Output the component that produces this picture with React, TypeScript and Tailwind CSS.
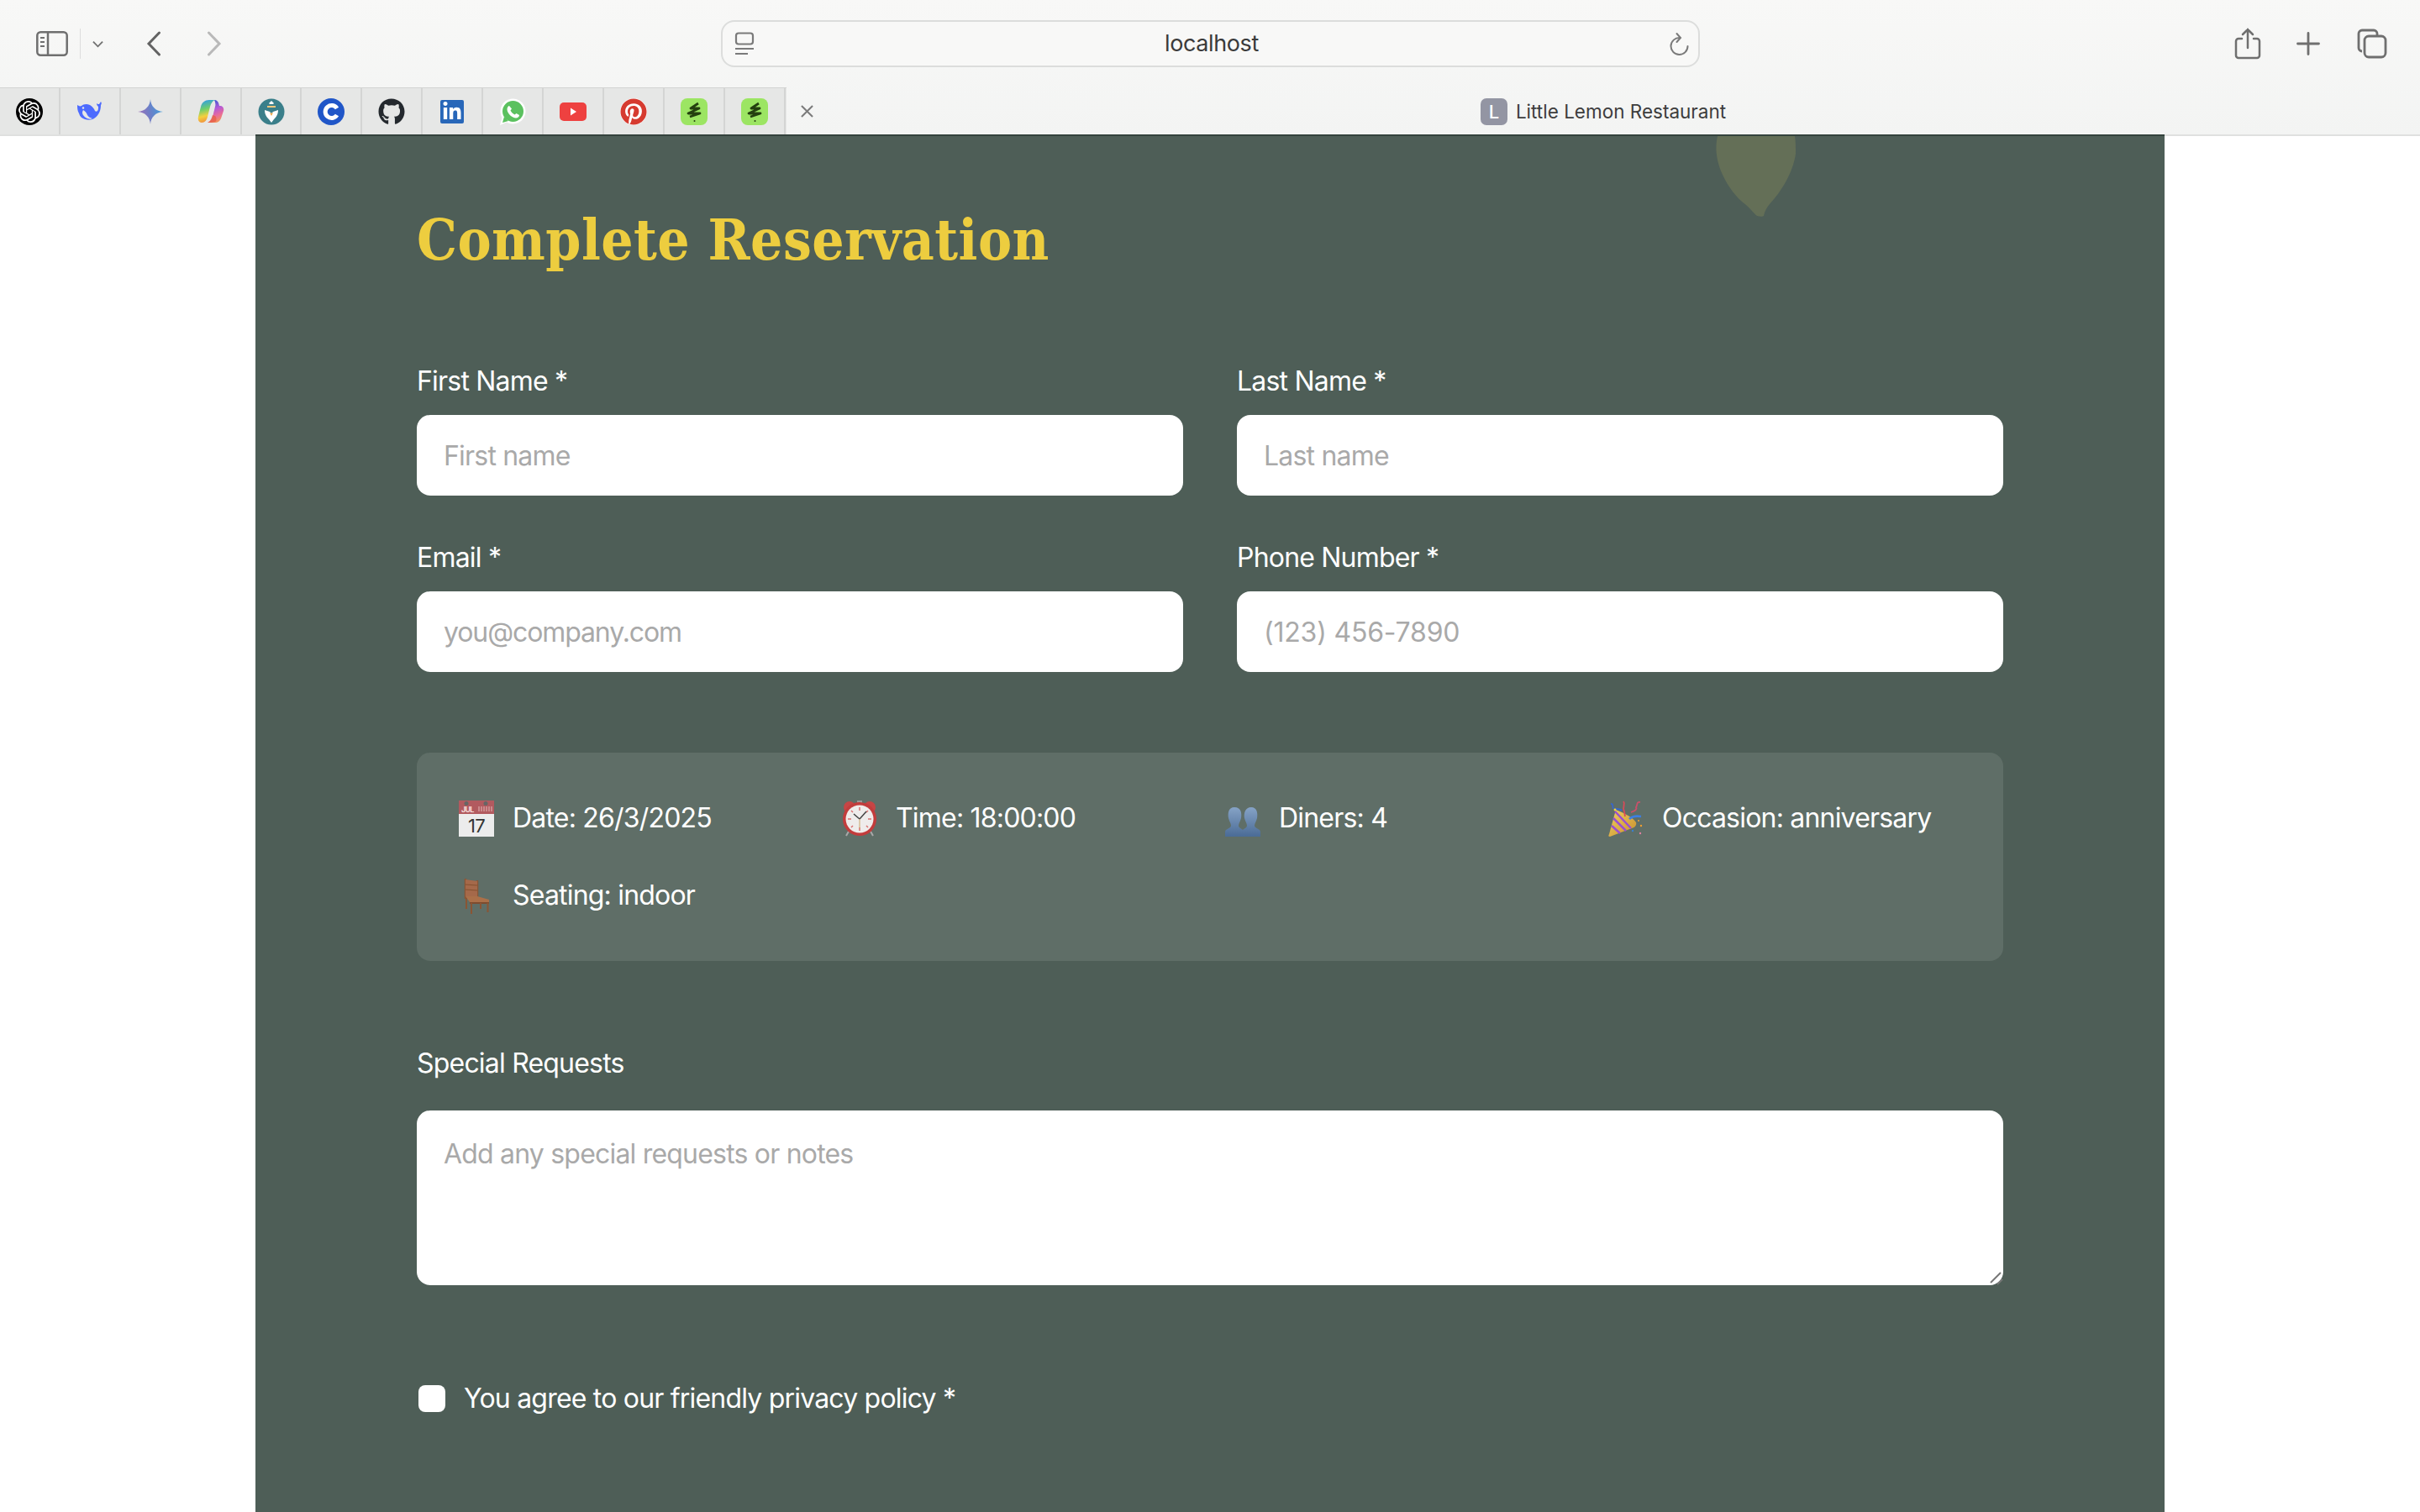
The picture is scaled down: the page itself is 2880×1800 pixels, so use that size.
import React from 'react';
import { SiOpenai } from 'react-icons/si';
import { FaGithub, FaLinkedinIn, FaPinterest } from 'react-icons/fa';

const inter = "[font-family:Inter,'Noto_Sans',sans-serif]";

// --- favicons ---
const DeepSeek = () => (
  <svg viewBox="0 0 32 32" className="w-8 h-8">
    <path
      fill="#4d6bfe"
      d="M1 8c2 1 3 2 5 1 2-2 6-3 10-1 3 2 5 4 6 7 1 1 2 1 3 0 1-1 1-3 1-5-1-1-2-2-2-4 1 1 2 1 3 1l2-3c1 1 1 3 0 4 0 6-2 12-8 16-3 2-7 2-11 1-3-1-6-3-7-7-2-3-2-7-2-10z"
    />
    <path fill="#e7e8e7" d="M8 14c-2 3-1 6 3 9 3 2 6 2 8 1-3-1-5-2-6-4-1-3-3-5-5-6z" />
    <circle cx="8" cy="11.500" r="1.200" fill="#e7e8e7" />
  </svg>
);

const Gemini = () => (
  <svg viewBox="0 0 32 32" className="w-8 h-8">
    <defs>
      <linearGradient id="gem" x1="0" y1="0.6" x2="1" y2="0.4">
        <stop offset="0" stopColor="#a070b8" />
        <stop offset="0.5" stopColor="#6a80c8" />
        <stop offset="1" stopColor="#3f9fdc" />
      </linearGradient>
    </defs>
    <path fill="url(#gem)" d="M16 1c.5 8 6 14.500 15 15-9 .5-14.500 7-15 15-.5-8-6-14.500-15-15 9-.5 14.500-7 15-15z" />
  </svg>
);

const Copilot = () => (
  <svg viewBox="0 0 32 32" className="w-8 h-8">
    <defs>
      <linearGradient id="copA" x1="0.3" y1="0" x2="0.5" y2="1">
        <stop offset="0" stopColor="#2f9be8" />
        <stop offset="0.4" stopColor="#6fcf6a" />
        <stop offset="0.7" stopColor="#f4d03e" />
        <stop offset="1" stopColor="#f08a3c" />
      </linearGradient>
      <linearGradient id="copB" x1="0.3" y1="0" x2="0.6" y2="1">
        <stop offset="0" stopColor="#2f55d0" />
        <stop offset="0.4" stopColor="#b25ad8" />
        <stop offset="0.7" stopColor="#e86a9a" />
        <stop offset="1" stopColor="#f29a55" />
      </linearGradient>
    </defs>
    <path fill="url(#copB)" d="M20 2c3 0 5 2 5.500 5l.5 2h1c3 0 5 3 4 6l-3 9c-1 3-4 5-7 5h-9c3-1 5-3 6-7l3-12c1-3 0-6-1-8z" />
    <path fill="url(#copA)" d="M14 2h7c-3 1-5 4-6 8l-3 12c-1 4-3 7-7 7H5c-3 0-5-3-4-7l3-12C5 5 9 2 14 2z" />
    <path fill="#e8604a" d="M12 29c2-1 4-3 5-6l1-3 3 1c2 2 2 6 0 7-3 1-6 1-9 1z" opacity="0.85" />
  </svg>
);

const Perplexity = () => (
  <svg viewBox="0 0 32 32" className="w-8 h-8">
    <circle cx="16" cy="16" r="15.500" fill="#3a7f8a" />
    <path fill="#fff" d="M16 3l3 3-1 1h-4l-1-1z" />
    <path fill="#f6c77c" d="M11 9h10v2H11z" />
    <path fill="#fff" d="M8 14l6 2 2 2 2-2 6-2c0 6-3 9-5 11l-3 4-3-4c-2-2-5-5-5-11z" />
    <path fill="#f0a23a" d="M14 17l2 4 2-4-2 1z" />
  </svg>
);

const Coursera = () => (
  <svg viewBox="0 0 32 32" className="w-8 h-8">
    <circle cx="16" cy="16" r="16" fill="#2056c8" />
    <path fill="none" stroke="#fff" strokeWidth="5" d="M23 12a7.500 7.500 0 1 0 0 8" />
  </svg>
);

const WhatsApp = () => (
  <svg viewBox="0 0 32 32" className="w-8 h-8">
    <path fill="#fff" d="M1 32l2.500-9A15 15 0 1 1 9 28.500z" />
    <circle cx="16.500" cy="15.500" r="12.500" fill="#5bc15f" />
    <path fill="#5bc15f" d="M4 29l2-7 5 5z" />
    <path fill="#fff" d="M12 9c-1 0-2.500 2-2.500 4 0 5 6 10.500 10.500 10.500 2 0 4-1.500 4-3.500l-3.500-2-2 1.500c-2-1-4-3-5-5l1.500-2z" />
  </svg>
);

const YouTube = () => (
  <svg viewBox="0 0 32 32" className="w-8 h-8">
    <rect x="0" y="5" width="32" height="22" rx="5" fill="#ee4140" />
    <path fill="#fff" d="M13 11.500l7 4.500-7 4.500z" />
  </svg>
);

const Bolt = () => (
  <svg viewBox="0 0 32 32" className="w-8 h-8">
    <rect width="32" height="32" rx="8" fill="#9ce563" />
    <path
      fill="none"
      stroke="#24400f"
      strokeWidth="2.800"
      strokeLinejoin="round"
      d="M21 6l-9 6h10l-13 6h14l-12 4"
    />
    <circle cx="16.500" cy="27" r="1" fill="#24400f" />
  </svg>
);

const Favicon = ({ children }: { children: React.ReactNode }) => (
  <div className="w-[71.9px] h-full flex items-center justify-center border-r-2 border-[#d4d5d4]">{children}</div>
);

const Tabs = () => (
  <div className="w-[936px] h-full flex bg-[#e6e7e6] border-t border-[#d2d3d2]">
    <Favicon>
      <div className="w-8 h-8 rounded-full bg-black flex items-center justify-center">
        <SiOpenai className="w-[26px] h-[26px] text-white" />
      </div>
    </Favicon>
    <Favicon><DeepSeek /></Favicon>
    <Favicon><Gemini /></Favicon>
    <Favicon><Copilot /></Favicon>
    <Favicon><Perplexity /></Favicon>
    <Favicon><Coursera /></Favicon>
    <Favicon><FaGithub className="w-8 h-8 text-[#24292e]" /></Favicon>
    <Favicon>
      <div className="w-7 h-7 rounded-[2px] bg-[#2867b9] flex items-center justify-center">
        <FaLinkedinIn className="w-6 h-6 text-white" />
      </div>
    </Favicon>
    <Favicon><WhatsApp /></Favicon>
    <Favicon><YouTube /></Favicon>
    <Favicon>
      <div className="w-8 h-8 rounded-full bg-white flex items-center justify-center">
        <FaPinterest className="w-8 h-8 text-[#d63b30]" />
      </div>
    </Favicon>
    <Favicon><Bolt /></Favicon>
    <Favicon><Bolt /></Favicon>
  </div>
);

// --- browser chrome ---
const Toolbar = () => (
  <div className="h-[104px] flex items-center">
    <svg viewBox="0 0 38 30" className="w-[38px] h-[30px] ml-[43px]" fill="none" stroke="#6f6f6f" strokeWidth="2.500">
      <rect x="1.300" y="1.300" width="35.400" height="27.400" rx="4" />
      <path d="M14 1.500v27" />
      <path d="M5 8h5M5 13h5M5 18h5" strokeWidth="2" />
    </svg>
    <div className="w-px h-9 ml-[14px] bg-[#dddddd]" />
    <svg viewBox="0 0 14 9" className="w-[13px] h-[9px] ml-[14px]" fill="none" stroke="#707070" strokeWidth="2">
      <path d="M1 1.500l6 6 6-6" />
    </svg>
    <svg viewBox="0 0 18 30" className="w-[18px] h-[30px] ml-[51px]" fill="none" stroke="#636363" strokeWidth="3" strokeLinecap="round">
      <path d="M15.500 2L3 15l12.500 13" />
    </svg>
    <svg viewBox="0 0 18 30" className="w-[18px] h-[30px] ml-[54px]" fill="none" stroke="#b9b9b9" strokeWidth="3" strokeLinecap="round">
      <path d="M2.500 2L15 15 2.500 28" />
    </svg>

    <div className="w-[1165px] h-14 ml-[594px] flex items-center justify-between pl-[14px] pr-[11px] rounded-2xl border-2 border-[#dcdddc] bg-[#f8f8f7]">
      <svg viewBox="0 0 24 28" className="w-6 h-7" fill="none" stroke="#7a7a7a" strokeWidth="2.200">
        <rect x="2" y="1.500" width="20" height="13" rx="3" />
        <path d="M1 20h22M1 26h15" />
      </svg>
      <span className={`${inter} text-[27px] tracking-[-0.4px] text-[#3b3b3b]`}>localhost</span>
      <svg viewBox="0 0 24 28" className="w-6 h-7" fill="none" stroke="#7a7a7a" strokeWidth="2" strokeLinecap="round">
        <path d="M13 7A10 10 0 1 0 22.500 17" />
        <path d="M9.500 2L14 7l-4.500 5" />
      </svg>
    </div>

    <svg viewBox="0 0 32 38" className="w-8 h-[38px] ml-[636px]" fill="none" stroke="#6f6f6f" strokeWidth="2.500" strokeLinecap="round">
      <path d="M9 13H5a3 3 0 0 0-3 3v17a3 3 0 0 0 3 3h22a3 3 0 0 0 3-3V16a3 3 0 0 0-3-3h-4" />
      <path d="M16 24V2M10 8l6-6 6 6" />
    </svg>
    <svg viewBox="0 0 28 28" className="w-7 h-7 ml-[42px]" fill="none" stroke="#6f6f6f" strokeWidth="2.800" strokeLinecap="round">
      <path d="M14 1.500v25M1.500 14h25" />
    </svg>
    <svg viewBox="0 0 36 36" className="w-9 h-9 ml-[44px]" fill="none" stroke="#6f6f6f" strokeWidth="2.800">
      <path d="M6 27a4 4 0 0 1-4-4V6a4 4 0 0 1 4-4h14a4 4 0 0 1 4 4v2" />
      <rect x="9" y="9" width="25" height="25" rx="5" />
    </svg>
  </div>
);

const TabRow = () => (
  <div className="h-14 flex items-stretch">
    <Tabs />
    <div className="w-[48px] flex items-center justify-center">
      <svg viewBox="0 0 18 16" className="w-[17px] h-[15px]" fill="none" stroke="#7b7b7b" strokeWidth="2.200">
        <path d="M2 1l14 14M16 1L2 15" />
      </svg>
    </div>
    <div className="flex-1 pr-[48px] pt-[2px] flex items-center justify-center gap-[10px]">
      <div className={`${inter} w-8 h-8 rounded-[7px] bg-[#9395a3] text-white text-[22px] font-medium flex items-center justify-center`}>L</div>
      <span className={`${inter} text-[22.500px] text-[#3d3d3d]`}>Little Lemon Restaurant</span>
    </div>
  </div>
);

// --- emoji drawings ---
const CalendarEmoji = () => (
  <svg viewBox="0 0 42 43" className="w-[42px] h-[43px]">
    <rect width="42" height="16" fill="#b25a5f" />
    <rect y="16" width="42" height="27" fill="#ececec" />
    <text x="3" y="14" fontSize="9" fill="#f5dede" fontFamily="Inter" fontWeight="700">JUL</text>
    <path d="M24 13V7M27 13V7M30 13V7M33 13V7M36 13V7M39 13V7" stroke="#d49a9c" strokeWidth="1.500" />
    <circle cx="9" cy="3.500" r="2.500" fill="#666666" />
    <circle cx="32" cy="3.500" r="2.500" fill="#666666" />
    <text x="21" y="38" fontSize="22" textAnchor="middle" fill="#333333" fontFamily="Inter">17</text>
  </svg>
);

const ClockEmoji = () => (
  <svg viewBox="0 0 42 43" className="w-[42px] h-[43px]">
    <path d="M9 35l-4 7M33 35l4 7" stroke="#a8a8a8" strokeWidth="2" />
    <circle cx="9" cy="8" r="7" fill="#c64545" />
    <circle cx="33" cy="8" r="7" fill="#c64545" />
    <rect x="18" y="0" width="6" height="4" fill="#999999" />
    <circle cx="21" cy="22" r="20" fill="#c23c3c" />
    <circle cx="21" cy="22" r="16.500" fill="#efeceb" />
    <path d="M21 8v4M21 32v4M7 22h4M31 22h4M11 12l2 2M31 12l-2 2M11 32l2-2M31 32l-2-2" stroke="#d9706f" strokeWidth="1.500" />
    <path d="M21 22l-7-6M21 22l8-9" stroke="#444444" strokeWidth="1.500" />
    <path d="M21 22v11" stroke="#c9a86a" strokeWidth="1" />
  </svg>
);

const DinersEmoji = () => (
  <svg viewBox="0 0 42 43" className="w-[42px] h-[43px]">
    <defs>
      <linearGradient id="bust" x1="0" y1="0" x2="0" y2="1">
        <stop offset="0" stopColor="#86a3c6" />
        <stop offset="1" stopColor="#4a6b96" />
      </linearGradient>
    </defs>
    <path fill="url(#bust)" d="M11 8C4 8 3 15 4 21c1 4 3 6 3 9 0 3-7 4-7 7v6h22v-6c0-3-6-4-6-7 0-3 2-5 3-9 1-6 0-13-8-13z" />
    <path fill="url(#bust)" d="M31 8c-7 0-9 7-8 13 1 4 3 6 3 9 0 3-6 4-6 7v6h22v-6c0-3-7-4-7-7 0-3 2-5 3-9 1-6 0-13-7-13z" />
  </svg>
);

const PartyEmoji = () => (
  <svg viewBox="0 0 42 43" className="w-[42px] h-[43px]">
    <defs>
      <linearGradient id="cone" x1="0" y1="0" x2="1" y2="1">
        <stop offset="0" stopColor="#f0cf62" />
        <stop offset="1" stopColor="#c98f2c" />
      </linearGradient>
    </defs>
    <path fill="url(#cone)" d="M9 11c5 2 20 8 24 15 1 3-1 6-5 7L2 43c-2 0-2-1-1-3z" />
    <path d="M6 21l15 15M4 30l10 9M8 13l19 20" stroke="#9a4fd0" strokeWidth="2.500" fill="none" />
    <path d="M18 1c3 4-2 6 1 12l1 6" stroke="#d84b5a" strokeWidth="1.800" fill="none" />
    <path d="M3 4c5 0-1 6 6 6 3 0 5 0 7 2" stroke="#3a67c8" strokeWidth="1.800" fill="none" />
    <path d="M38 2c-5-1-3 4-5 6 2 3-3 5-6 6" stroke="#c9506a" strokeWidth="1.800" fill="none" />
    <path d="M25 22c3-3 8-4 14-3" stroke="#3d7fe0" strokeWidth="2.600" fill="none" />
    <circle cx="8" cy="11" r="1.400" fill="#f0d040" />
    <circle cx="39" cy="30" r="1.200" fill="#f0a030" />
    <circle cx="38" cy="39" r="1.200" fill="#e080a0" />
    <circle cx="29" cy="36" r="1.200" fill="#3a80d0" />
    <circle cx="36" cy="24" r="1" fill="#f0a030" />
  </svg>
);

const ChairEmoji = () => (
  <svg viewBox="0 0 31 43" className="w-[31px] h-[43px] ml-[6px]">
    <path d="M2 1v24M16 3v21" stroke="#8a5534" strokeWidth="2.500" />
    <path fill="#a5694a" d="M2 2l14 2v18H2z" />
    <path d="M2 8l14 1M2 14l14 1" stroke="#84502f" strokeWidth="1.200" />
    <path fill="#ab7049" d="M2 22h14l14 4v3L7 29z" />
    <path fill="#7d4c2e" d="M7 29l23 0v2H7z" />
    <path d="M3 24v13M9 30v13M28.500 30v11M20 30v7" stroke="#8a5534" strokeWidth="2" />
  </svg>
);

const infoItems = [
  { icon: <CalendarEmoji />, label: 'Date: 26/3/2025' },
  { icon: <ClockEmoji />, label: 'Time: 18:00:00' },
  { icon: <DinersEmoji />, label: 'Diners: 4' },
  { icon: <PartyEmoji />, label: 'Occasion: anniversary' },
  { icon: <ChairEmoji />, label: 'Seating: indoor' },
];

const inputClass = `${inter} w-full h-24 px-8 rounded-2xl bg-white text-[32px] text-[#333] placeholder:text-[#a9a9a9] outline-none`;

const Field = ({ label, placeholder, extra }: { label: string; placeholder: string; extra?: string }) => (
  <div>
    <label className="block h-12 mb-[17px] text-[32px] leading-[50px] text-white">{label}</label>
    <input className={`${inputClass} ${extra ?? ''}`} placeholder={placeholder} />
  </div>
);

export default function App() {
  return (
    <div className={`${inter} h-[1800px] overflow-hidden bg-white`}>
      <header className="h-[160px] bg-linear-to-b from-[#f8f8f7] to-[#f3f4f3]">
        <Toolbar />
        <TabRow />
      </header>

      <div className="border-t-2 border-[#dfe0df]">
        <main className="relative w-[2272px] h-[1640px] mx-auto -mt-[2px] px-48 pt-[76px] overflow-hidden tracking-[-0.8px] bg-[#4e5e57] border-t-2 border-[#34433d]">
          {/* decorative leaf clipped by the panel top */}
          <svg viewBox="0 0 95 96" className="absolute top-0 left-[1738px] w-[95px] h-[96px]">
            <path
              fill="#646f57"
              d="M2 0C-1 14 0 28 8 46c7 15 16 27 28 36 5 4 9 10 13 13 3 1 7 1 8 0 1-5 3-9 7-14 14-15 28-38 31-60 0-8 0-15-1-21z"
            />
          </svg>

          <h1 className="h-24 text-[67px] leading-[96px] tracking-[0.45px] font-bold text-[#edcd3f] [font-family:'DejaVu_Serif_Condensed','DejaVu_Serif',serif]">
            Complete Reservation
          </h1>

          <div className="mt-[95px] grid grid-cols-2 gap-x-16 gap-y-[49px]">
            <Field label="First Name *" placeholder="First name" />
            <Field label="Last Name *" placeholder="Last name" />
            <Field label="Email *" placeholder="you@company.com" extra="tracking-[-1.1px]" />
            <Field label="Phone Number *" placeholder="(123) 456-7890" extra="tracking-[-0.2px]" />
          </div>

          <section className="mt-24 p-12 rounded-2xl bg-[#5f6e67] grid grid-cols-4 gap-x-8 gap-y-8">
            {infoItems.map((item) => (
              <div key={item.label} className="h-[60px] flex items-center gap-4 text-[32px] text-white">
                <div className="w-[50px] pl-[2px] flex">{item.icon}</div>
                <span>{item.label}</span>
              </div>
            ))}
          </section>

          <label className="block h-12 mt-[97px] mb-[33px] text-[32px] leading-[50px] text-white">Special Requests</label>
          <div className="relative">
            <textarea
              className={`${inter} block w-full h-[208px] px-8 pt-[32px] rounded-2xl bg-white text-[32px] leading-10 text-[#333] placeholder:text-[#a9a9a9] outline-none resize-none`}
              placeholder="Add any special requests or notes"
            />
            {/* resize grip */}
            <svg viewBox="0 0 16 16" className="absolute right-0 bottom-0 w-4 h-4" fill="none" stroke="#767676" strokeWidth="2">
              <path d="M1 13L13 1" />
              <path d="M9 15l6-6" />
            </svg>
          </div>

          <div className="h-12 mt-[111px] flex items-center">
            <div className="w-8 h-8 ml-[2px] rounded-lg bg-white" />
            <span className="ml-[22px] text-[32px] text-white">You agree to our friendly privacy policy *</span>
          </div>
        </main>
      </div>
    </div>
  );
}
